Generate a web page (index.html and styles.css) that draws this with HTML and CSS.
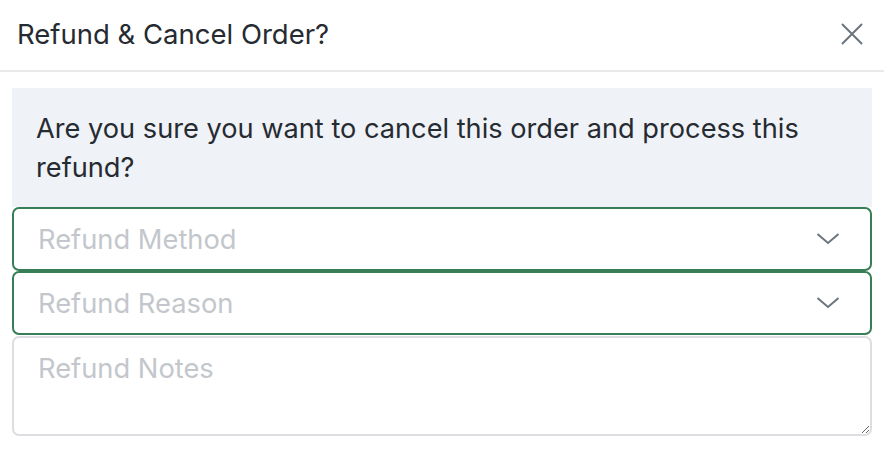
FILE: index.html
```html
<!DOCTYPE html>
<html>
<head>
<meta charset="utf-8">
<link rel="stylesheet" href="styles.css">
</head>
<body>
<div class="modal">
  <div class="modal-header">
    <h1 class="modal-title">Refund &amp; Cancel Order?</h1>
    <button class="close" aria-label="Close">
      <svg width="24" height="24" viewBox="0 0 24 24"><path d="M2 2 L22 22 M22 2 L2 22" stroke="#6c757d" stroke-width="2" fill="none"/></svg>
    </button>
  </div>
  <div class="modal-body">
    <div class="notice">Are you sure you want to cancel this order and process this refund?</div>
    <div class="select">
      <span class="placeholder">Refund Method</span>
      <svg class="chev" width="24" height="12" viewBox="0 0 24 12"><path d="M1.5 1 L12 10 L22.5 1" stroke="#6c757d" stroke-width="2" fill="none"/></svg>
    </div>
    <div class="select">
      <span class="placeholder">Refund Reason</span>
      <svg class="chev" width="24" height="12" viewBox="0 0 24 12"><path d="M1.5 1 L12 10 L22.5 1" stroke="#6c757d" stroke-width="2" fill="none"/></svg>
    </div>
    <textarea class="notes" placeholder="Refund Notes"></textarea>
  </div>
</div>
</body>
</html>
```
FILE: styles.css
```css
* { box-sizing: border-box; }
html, body { margin: 0; padding: 0; background: #fff; }
body {
  font-family: Inter, "Noto Sans", "Liberation Sans", sans-serif;
  color: #262b31;
}
.modal { width: 884px; }
.modal-header {
  height: 72px;
  border-bottom: 2px solid #e9e9eb;
  display: flex;
  align-items: center;
  justify-content: space-between;
  padding: 0 20px 2px 17px;
}
.modal-title {
  margin: 0;
  font-size: 27.5px;
  font-weight: 400;
  color: #262b31;
}
.close {
  border: 0;
  background: none;
  padding: 0;
  width: 24px;
  height: 24px;
  display: flex;
}
.modal-body {
  padding: 16px 12px 0 12px;
  display: flex;
  flex-direction: column;
}
.notice {
  background: #eff2f7;
  padding: 21px 24px 20px 24px;
  font-size: 27.2px;
  line-height: 39px;
  color: #262b31;
}
.select {
  height: 64px;
  border: 2px solid #377d55;
  border-radius: 7px;
  display: flex;
  align-items: center;
  justify-content: space-between;
  padding: 0 30px 0 24px;
}
.placeholder {
  font-size: 27.3px;
  color: #c3c7cc;
}
.chev { display: block; }
.notes {
  margin-top: 1px;
  height: 100px;
  border: 2px solid #dcdee1;
  border-radius: 7px;
  padding: 14px 24px;
  font-family: Inter, "Noto Sans", "Liberation Sans", sans-serif;
  font-size: 27.3px;
  resize: vertical;
  outline: none;
}
.notes::placeholder { color: #c3c7cc; }
```
